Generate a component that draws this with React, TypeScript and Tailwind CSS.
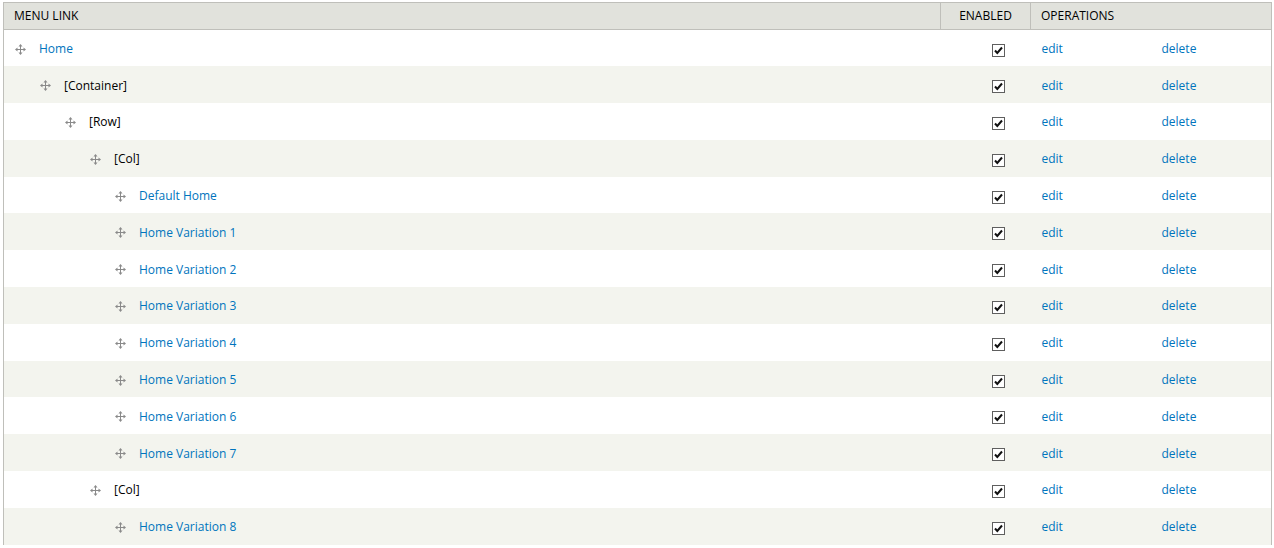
import React from "react";

type Item = { label: string; depth: number; link: boolean };

const items: Item[] = [
  { label: "Home", depth: 0, link: true },
  { label: "[Container]", depth: 1, link: false },
  { label: "[Row]", depth: 2, link: false },
  { label: "[Col]", depth: 3, link: false },
  { label: "Default Home", depth: 4, link: true },
  { label: "Home Variation 1", depth: 4, link: true },
  { label: "Home Variation 2", depth: 4, link: true },
  { label: "Home Variation 3", depth: 4, link: true },
  { label: "Home Variation 4", depth: 4, link: true },
  { label: "Home Variation 5", depth: 4, link: true },
  { label: "Home Variation 6", depth: 4, link: true },
  { label: "Home Variation 7", depth: 4, link: true },
  { label: "[Col]", depth: 3, link: false },
  { label: "Home Variation 8", depth: 4, link: true },
];

const indents = ["pl-[11px]", "pl-[36px]", "pl-[61px]", "pl-[86px]", "pl-[111px]"];

const DragHandle = () => (
  <svg width="11" height="11" viewBox="0 0 11 11" className="shrink-0">
    <g stroke="#8a8a8a" strokeWidth="1" fill="none">
      <line x1="5.5" y1="1" x2="5.5" y2="10" />
      <line x1="1" y1="5.5" x2="10" y2="5.5" />
    </g>
    <g fill="#8a8a8a">
      <polygon points="5.5,0 3.5,2.5 7.5,2.5" />
      <polygon points="5.5,11 3.5,8.5 7.5,8.5" />
      <polygon points="0,5.5 2.5,3.5 2.5,7.5" />
      <polygon points="11,5.5 8.5,3.5 8.5,7.5" />
    </g>
  </svg>
);

const Checkbox = () => (
  <svg width="13" height="13" viewBox="0 0 13 13">
    <rect x="0.5" y="0.5" width="12" height="12" fill="#fff" stroke="#5f5f5f" />
    <path d="M3 6.5 L5.3 9 L10 3.5" stroke="#111" strokeWidth="2" fill="none" />
  </svg>
);

const App = () => {
  return (
    <div className="bg-white w-[1274px] h-[548px] pt-[2px] pl-[3px] pr-[2px] font-['Open_Sans',sans-serif] text-[12px] text-[#222330]">
      <table className="w-full border-collapse table-fixed">
        <colgroup>
          <col className="w-[937px]" />
          <col className="w-[90px]" />
          <col className="w-[120px]" />
          <col />
        </colgroup>
        <thead>
          <tr className="bg-[#e1e2dc] h-[27px] text-left text-black">
            <th className="border border-[#bfbfba] font-normal px-[10px] py-0 uppercase">
              Menu link
            </th>
            <th className="border border-[#bfbfba] font-normal text-center py-0 uppercase">
              Enabled
            </th>
            <th
              colSpan={2}
              className="border border-[#bfbfba] font-normal px-[10px] py-0 uppercase"
            >
              Operations
            </th>
          </tr>
        </thead>
        <tbody>
          {items.map((item, key) => (
            <tr
              key={key}
              className={
                key % 2 === 0
                  ? "bg-white h-[36.8px]"
                  : "bg-[#f3f4ee] h-[36.8px]"
              }
            >
              <td className="border-l border-[#bfbfba] p-0 pt-[2px]">
                <div className={`flex items-center ${indents[item.depth]}`}>
                  <DragHandle />
                  <span
                    className={
                      item.link
                        ? "ml-[13px] text-[#0074bd]"
                        : "ml-[13px] text-black"
                    }
                  >
                    {item.label}
                  </span>
                </div>
              </td>
              <td className="p-0 pt-[2px]">
                <div className="flex items-center pl-[51px] pt-[2px]">
                  <Checkbox />
                </div>
              </td>
              <td className="p-0 pt-[2px] pl-[11px] text-[#0074bd]">edit</td>
              <td className="border-r border-[#bfbfba] p-0 pt-[2px] pl-[11px] text-[#0074bd]">
                delete
              </td>
            </tr>
          ))}
        </tbody>
      </table>
    </div>
  );
};

export default App;
